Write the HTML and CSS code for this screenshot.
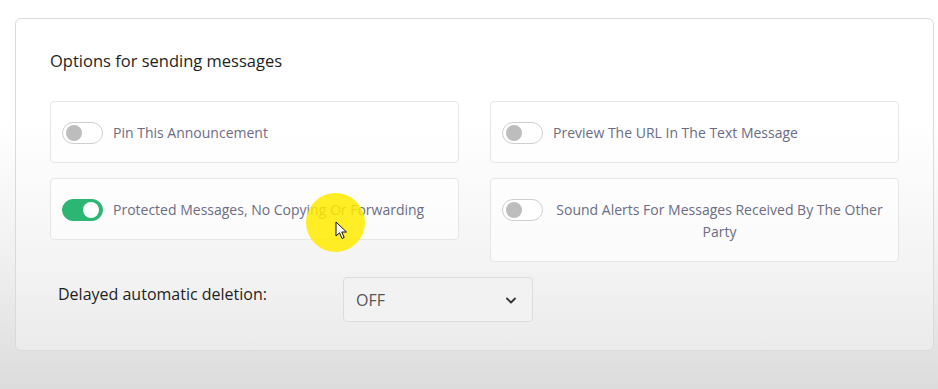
FILE: index.html
```html
<!DOCTYPE html>
<html>
<head>
    <meta charset="UTF-8">
    <title>Options for sending messages</title>
    <link rel="stylesheet" href="styles.css">
</head>
<body>
    <div class="page">
        <div class="panel">
            <h3 class="panel-title">Options for sending messages</h3>

            <div class="options">
                <div class="option">
                    <span class="switch"><span class="knob"></span></span>
                    <span class="option-text">Pin This Announcement</span>
                </div>
                <div class="option">
                    <span class="switch"><span class="knob"></span></span>
                    <span class="option-text">Preview The URL In The Text Message</span>
                </div>
                <div class="option">
                    <span class="switch on"><span class="knob"></span></span>
                    <span class="option-text">Protected Messages, No Copying Or Forwarding</span>
                </div>
                <div class="option">
                    <span class="switch"><span class="knob"></span></span>
                    <span class="option-text centered">Sound Alerts For Messages Received By The Other Party</span>
                </div>
            </div>

            <div class="delete-row">
                <label class="delete-label">Delayed automatic deletion:</label>
                <div class="select">
                    <span>OFF</span>
                    <svg width="14" height="14" viewBox="0 0 14 14"><path d="M3 5.5 L7 9.5 L11 5.5" fill="none" stroke="#333" stroke-width="1.8" stroke-linecap="round" stroke-linejoin="round"/></svg>
                </div>
            </div>
        </div>
    </div>

    <!-- cursor highlight from the screen recording -->
    <div class="cursor-spot"></div>
    <svg class="cursor" width="14" height="20" viewBox="0 0 14 20"><path d="M1 1 L1 15 L4.5 11.8 L7 17.5 L9.2 16.5 L6.8 11 L11.5 11 Z" fill="#fff" stroke="#111" stroke-width="1"/></svg>
</body>
</html>
```

FILE: styles.css
```css
body {
    margin: 0;
    font-family: "Open Sans", "Noto Sans", Arial, sans-serif;
    background: linear-gradient(to bottom, #ffffff 0px, #ffffff 120px, #f1f1f1 250px, #dcdcdc 389px);
    min-height: 389px;
}
.page {
    padding: 18px 4px 0 15px;
}
.panel {
    box-sizing: border-box;
    width: 919px;
    height: 333px;
    padding: 31px 34px 0 34px;
    border: 1px solid #dadada;
    border-radius: 6px;
    background: rgba(255, 255, 255, 0.3);
}
.panel-title {
    margin: 0;
    font-size: 16.5px;
    font-weight: 400;
    line-height: 22px;
    color: #1e1e1e;
}
.options {
    display: grid;
    grid-template-columns: 1fr 1fr;
    column-gap: 31px;
    row-gap: 15px;
    align-items: start;
    margin-top: 29px;
}
.option {
    display: flex;
    align-items: flex-start;
    gap: 10px;
    padding: 20px 12px 18px 11px;
    border: 1px solid #e6e6e6;
    border-radius: 4px;
    background: rgba(255, 255, 255, 0.6);
}
.switch {
    flex: none;
    position: relative;
    width: 39px;
    height: 20px;
    border: 1px solid #cfcfcf;
    border-radius: 11px;
    background: #fff;
}
.switch .knob {
    position: absolute;
    top: 2px;
    left: 3px;
    width: 16px;
    height: 16px;
    border-radius: 50%;
    background: #bdbdbd;
}
.switch.on {
    background: #2bb673;
    border-color: #2bb673;
}
.switch.on .knob {
    left: auto;
    right: 3px;
    background: #fff;
}
.option-text {
    font-size: 14px;
    line-height: 22px;
    color: #6c6c84;
}
.option-text.centered {
    text-align: center;
    flex: 1;
}
.delete-row {
    display: flex;
    align-items: center;
    margin-top: 15px;
    padding-left: 8px;
}
.delete-label {
    width: 285px;
    font-size: 16px;
    color: #1e1e1e;
    margin-top: -12px;
}
.select {
    display: flex;
    align-items: center;
    justify-content: space-between;
    box-sizing: border-box;
    width: 190px;
    height: 45px;
    padding: 0 14px 0 12px;
    border: 1px solid #dcdcdc;
    border-radius: 4px;
    background: #f2f2f2;
    font-size: 16px;
    color: #555;
}
.cursor-spot {
    position: absolute;
    left: 306px;
    top: 193px;
    width: 59px;
    height: 59px;
    border-radius: 50%;
    background: rgba(255, 234, 0, 0.85);
}
.cursor {
    position: absolute;
    left: 335px;
    top: 221px;
}
```
